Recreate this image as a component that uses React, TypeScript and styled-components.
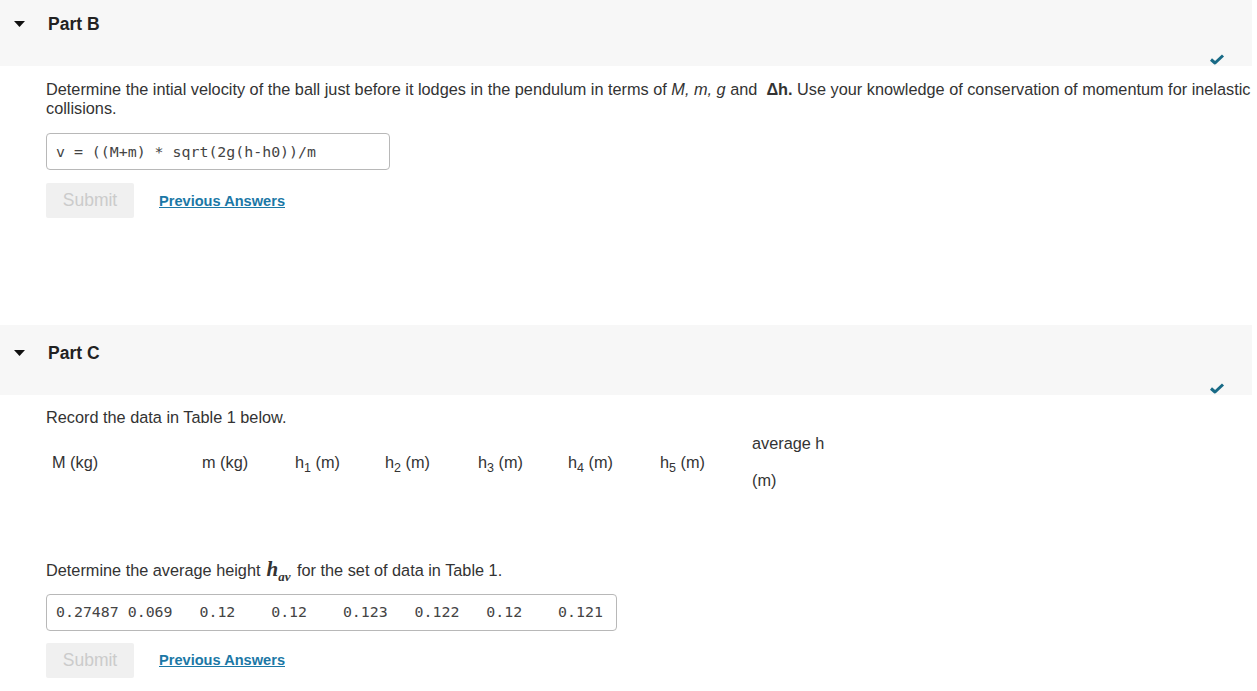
import React from "react";
import styled, { createGlobalStyle } from "styled-components";

const GlobalStyle = createGlobalStyle`
  body {
    margin: 0;
    background: #ffffff;
    font-family: "Liberation Sans", Arial, sans-serif;
    color: #333333;
  }
`;

const Page = styled.div`
  width: 1257px;
  overflow: hidden;
`;

const Section = styled.section<{ $first?: boolean }>`
  margin-top: ${({ $first }) => ($first ? "-4px" : "0")};
`;

const Header = styled.div`
  display: flex;
  flex-direction: column;
  height: 70px;
  margin-right: 5px;
  background: #f7f7f7;
`;

const HeaderRow = styled.div`
  display: flex;
  align-items: center;
  height: 56px;
  padding-left: 14px;
`;

const Caret = styled.svg`
  width: 11px;
  height: 6px;
  margin-right: 23px;
`;

const Title = styled.h2`
  margin: 0;
  font-size: 17.5px;
  font-weight: bold;
  color: #222222;
`;

const CheckRow = styled.div`
  display: flex;
  justify-content: flex-end;
  padding-right: 27px;
  margin-top: 2px;
`;

const Body = styled.div<{ $top: number; $bottom: number }>`
  padding: ${({ $top }) => $top}px 0 ${({ $bottom }) => $bottom}px 46px;
`;

const Text = styled.p<{ $top?: number }>`
  margin: ${({ $top }) => $top ?? 0}px 0 0;
  font-size: 16.3px;
  line-height: 19px;
  color: #333333;
`;

const MathH = styled.span`
  font-family: "Liberation Serif", "Times New Roman", serif;
  font-style: italic;
  font-weight: bold;
  font-size: 21px;
  margin: 0 2px 0 6px;
  sub {
    font-size: 13px;
    line-height: 0;
  }
`;

const AnswerBox = styled.div<{ $width: number; $top: number }>`
  box-sizing: border-box;
  width: ${({ $width }) => $width}px;
  height: 37px;
  margin-top: ${({ $top }) => $top}px;
  padding: 0 9px;
  display: flex;
  align-items: center;
  border: 1px solid #b8b8b8;
  border-radius: 4px;
  font-family: "DejaVu Sans Mono", "Liberation Mono", monospace;
  font-size: 14.9px;
  color: #444444;
  white-space: pre;
  tab-size: 8;
`;

const Actions = styled.div<{ $top: number }>`
  display: flex;
  align-items: center;
  gap: 25px;
  margin-top: ${({ $top }) => $top}px;
`;

const SubmitButton = styled.button`
  width: 88px;
  height: 35px;
  border: none;
  border-radius: 2px;
  background: #f0f0f0;
  color: #cbcbcb;
  font-family: "Liberation Sans", Arial, sans-serif;
  font-size: 17.5px;
`;

const PrevLink = styled.a`
  font-size: 14.6px;
  font-weight: bold;
  color: #1b78a6;
  text-decoration: underline;
  cursor: pointer;
`;

const DataTable = styled.div`
  display: grid;
  grid-template-columns: 150px 93px 90px 93px 90px 92px 92px auto;
  align-items: center;
  margin: 7px 0 0 6px;
  font-size: 16.3px;
  color: #333333;
`;

const HeadCell = styled.div`
  line-height: 18.5px;
  sub {
    font-size: 12.5px;
    line-height: 0;
  }
`;

const CheckIcon = () => (
  <svg width="16" height="11" viewBox="0 0 16 11">
    <polyline
      points="2,5.5 6,9 14,1.5"
      fill="none"
      stroke="#186a86"
      strokeWidth="3"
      strokeLinejoin="round"
    />
  </svg>
);

const PartHeader = ({ title }: { title: string }) => (
  <Header>
    <HeaderRow>
      <Caret viewBox="0 0 11 6">
        <polygon points="0,0 11,0 5.5,6" fill="#111" />
      </Caret>
      <Title>{title}</Title>
    </HeaderRow>
    <CheckRow>
      <CheckIcon />
    </CheckRow>
  </Header>
);

const Answer = ({ top, children }: { top: number; children: React.ReactNode }) => (
  <Actions $top={top}>
    <SubmitButton disabled>Submit</SubmitButton>
    <PrevLink>{children}</PrevLink>
  </Actions>
);

export default function App() {
  return (
    <Page>
      <GlobalStyle />
      <Section $first>
        <PartHeader title="Part B" />
        <Body $top={14} $bottom={107}>
          <Text>
            Determine the intial velocity of the ball just before it lodges in the pendulum
            in terms of <i>M, m, g</i> and &nbsp;<b>Δh.</b> Use your knowledge of conservation
            of momentum for inelastic collisions.
          </Text>
          <AnswerBox $width={344} $top={15}>{"v = ((M+m) * sqrt(2g(h-h0))/m"}</AnswerBox>
          <Answer top={13}>Previous Answers</Answer>
        </Body>
      </Section>
      <Section>
        <PartHeader title="Part C" />
        <Body $top={13} $bottom={13}>
          <Text>Record the data in Table 1 below.</Text>
          <DataTable>
            <HeadCell>M (kg)</HeadCell>
            <HeadCell>m (kg)</HeadCell>
            <HeadCell>h<sub>1</sub> (m)</HeadCell>
            <HeadCell>h<sub>2</sub> (m)</HeadCell>
            <HeadCell>h<sub>3</sub> (m)</HeadCell>
            <HeadCell>h<sub>4</sub> (m)</HeadCell>
            <HeadCell>h<sub>5</sub> (m)</HeadCell>
            <HeadCell>
              average h
              <br />
              <br />
              (m)
            </HeadCell>
          </DataTable>
          <Text $top={70}>
            Determine the average height
            <MathH>
              h<sub>av</sub>
            </MathH>{" "}
            for the set of data in Table 1.
          </Text>
          <AnswerBox $width={571} $top={14}>
            {"0.27487 0.069\t0.12\t0.12\t0.123\t0.122\t0.12\t0.121"}
          </AnswerBox>
          <Answer top={12}>Previous Answers</Answer>
        </Body>
      </Section>
    </Page>
  );
}
